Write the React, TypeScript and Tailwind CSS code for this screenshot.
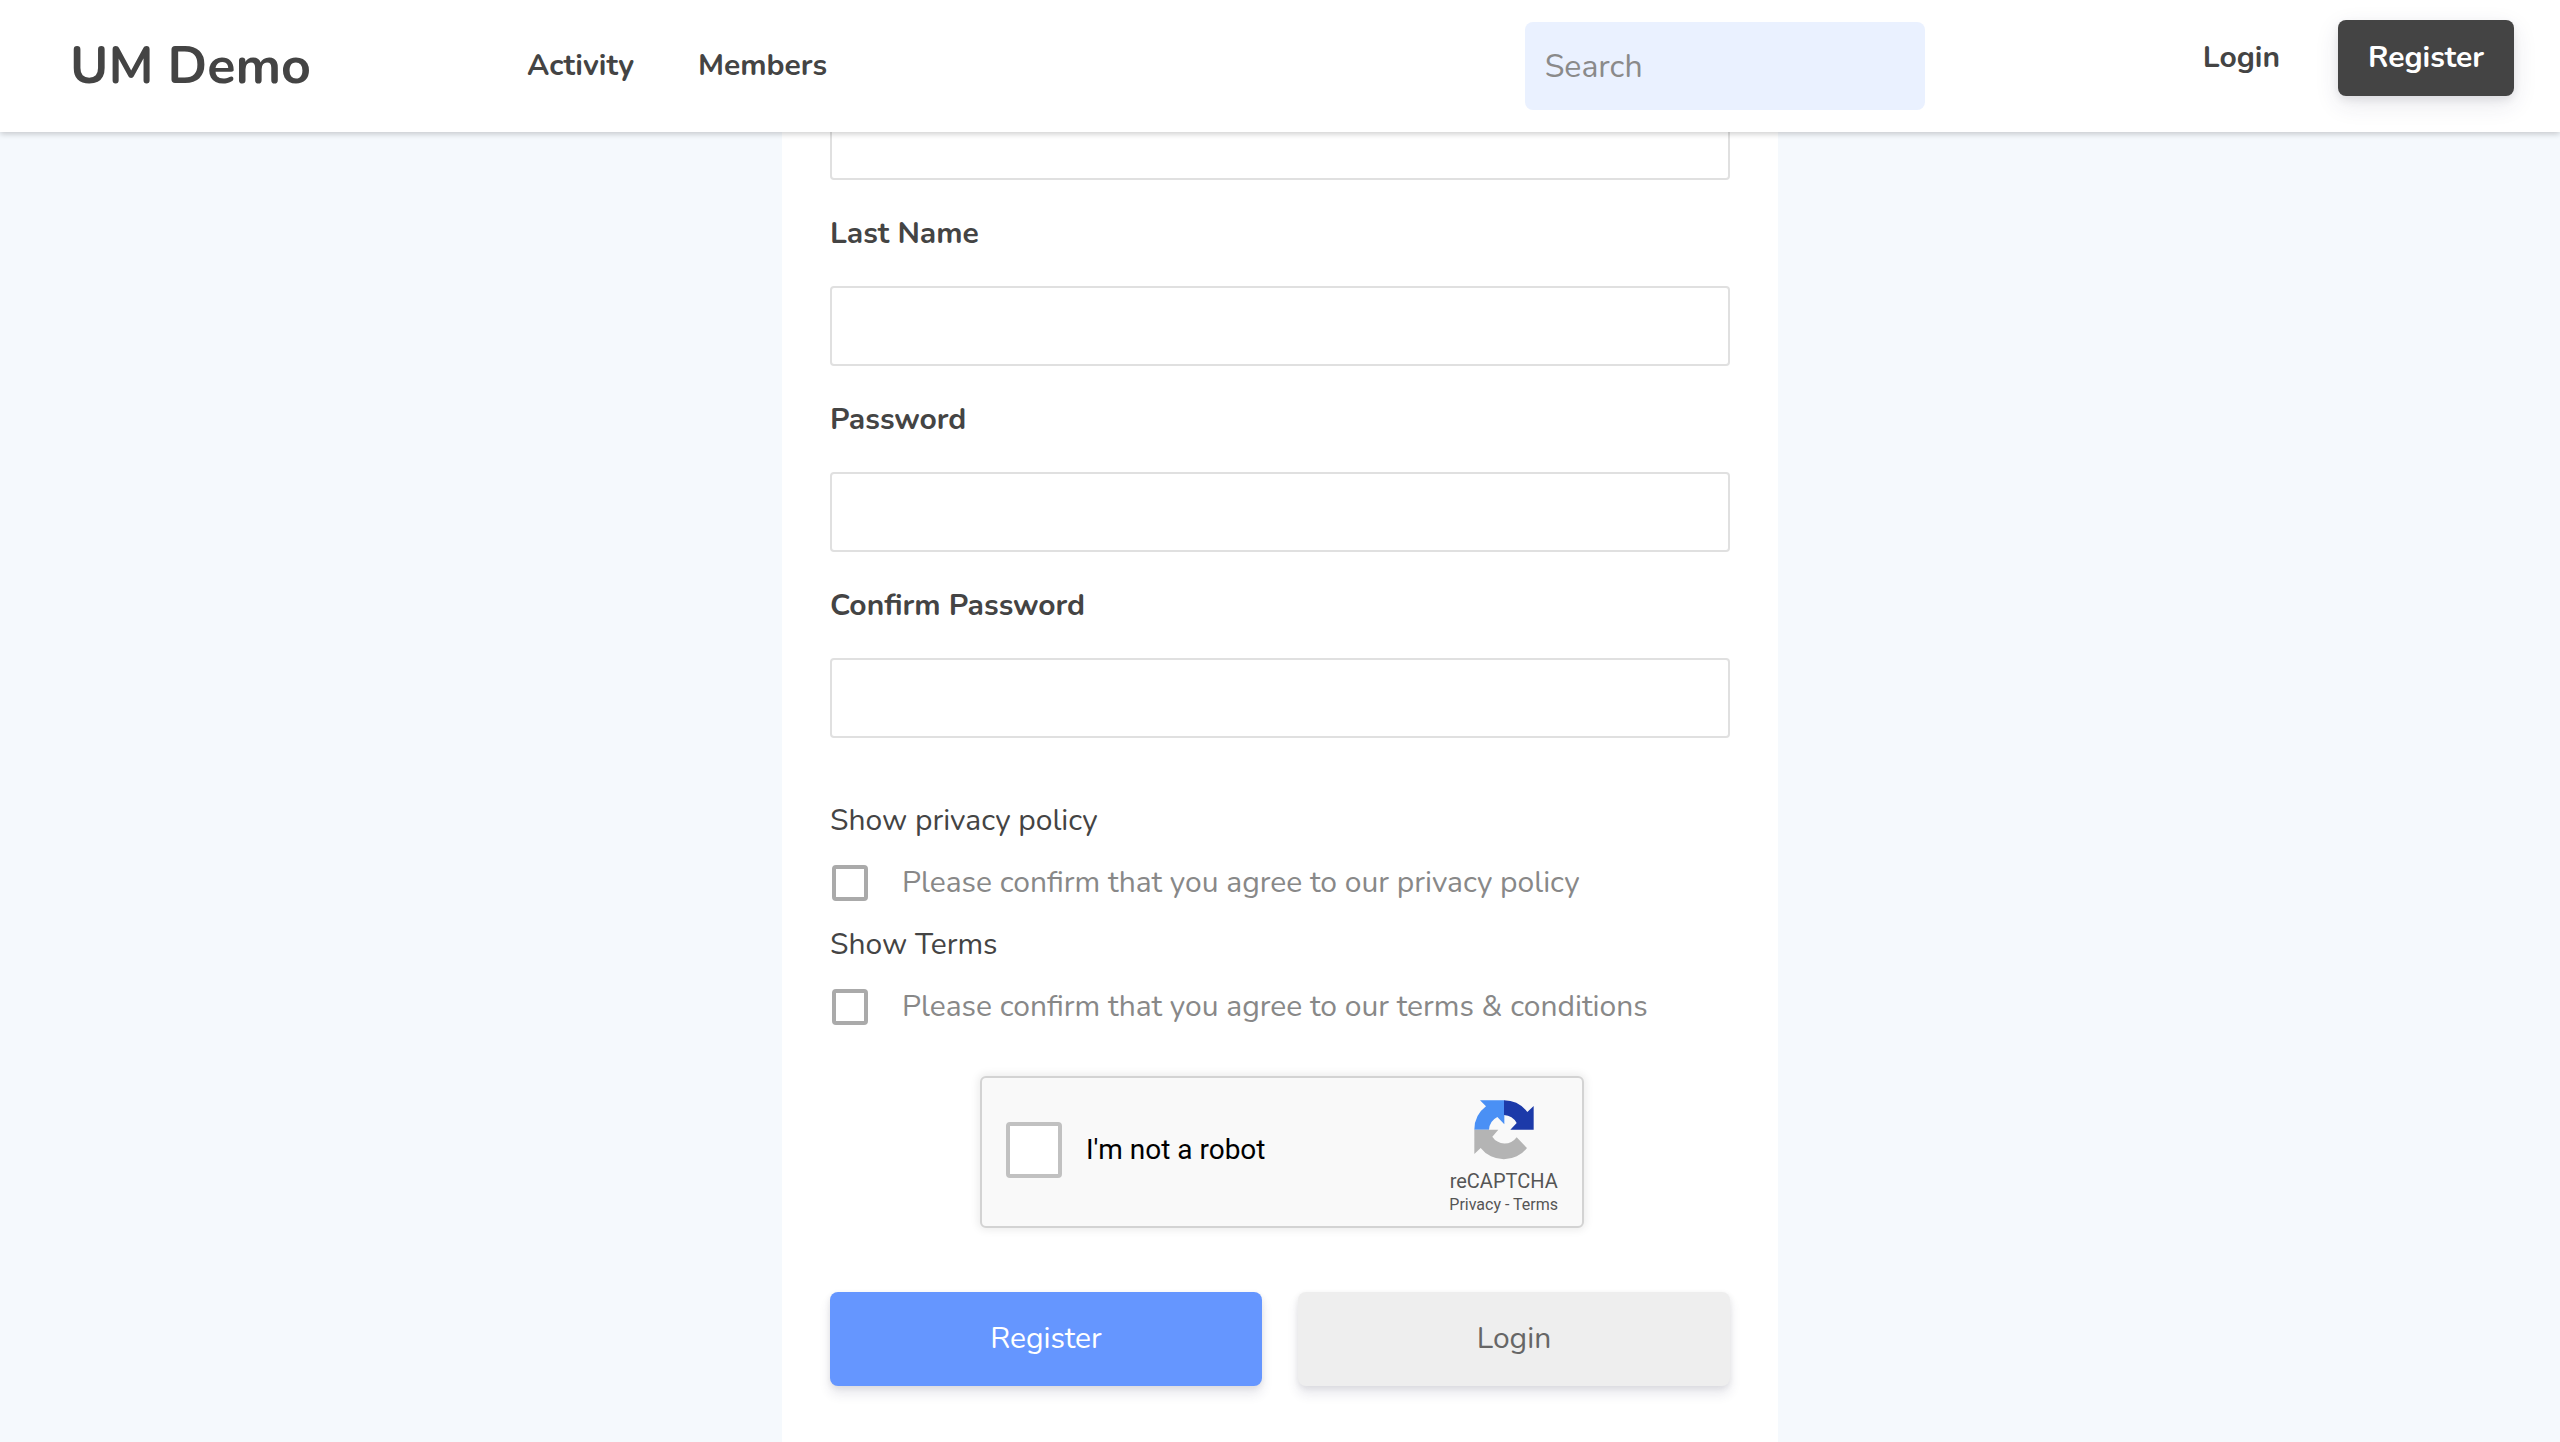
const SANS = "font-['Nunito','Lato',sans-serif]";

function RecaptchaLogo() {
  return (
    <svg viewBox="0 0 180 180" className="size-[60px]" aria-hidden="true">
      <path d="M1 89A89 88 0 0 1 36 19L18 1H91V73L70 51A46 46 0 0 0 45 89Z" fill="#4a90f5" />
      <path d="M90 1A89 88 0 0 1 160 36L179 18V89H109L128 69A46 46 0 0 0 90 45Z" fill="#1c3aa9" />
      <path d="M1 89H73L55 110A44 44 0 0 0 128 112L159 144A88 88 0 0 1 20 144L1 162Z" fill="#b4b4b4" />
    </svg>
  );
}

function Field({ id, label, type }: { id: string; label: string; type: string }) {
  return (
    <div>
      <label htmlFor={id} className="mb-8 block text-[30px] leading-10 font-bold text-[#444]">
        {label}
      </label>
      <input
        id={id}
        type={type}
        className="block h-20 w-full rounded-[4px] border-2 border-[#e0e0e0] bg-white px-6 text-[30px] outline-none"
      />
    </div>
  );
}

function Consent({ id, link, label }: { id: string; link: string; label: string }) {
  return (
    <div>
      <a href="#" className="block text-[30px] leading-10 text-[#444]">
        {link}
      </a>
      <div className="mt-[22px] flex h-10 items-center gap-[34px] pl-[2px]">
        <input
          id={id}
          type="checkbox"
          className="size-9 appearance-none rounded-[4px] border-4 border-[#aaa] bg-white checked:bg-[#6596ff]"
        />
        <label htmlFor={id} className="text-[30px] leading-10 text-[#888]">
          {label}
        </label>
      </div>
    </div>
  );
}

function Header() {
  return (
    <header className="relative z-10 flex h-[132px] items-center bg-white pr-[46px] pl-[70px] shadow-[0_2px_6px_rgba(0,0,0,0.2)]">
      <div className="w-[457px]">
        <a href="#" className="text-[52px] leading-[60px] font-bold text-[#444]">
          UM Demo
        </a>
      </div>
      <nav className="flex gap-16 text-[30px] leading-10 font-bold text-[#444]">
        <a href="#">Activity</a>
        <a href="#">Members</a>
      </nav>
      <form className="mr-[278px] ml-auto" role="search">
        <input
          type="search"
          placeholder="Search"
          aria-label="Search"
          className="block h-[88px] w-[400px] rounded-lg bg-[#eaf1ff] px-5 text-[32px] text-[#444] outline-none placeholder:text-[#8a8a8a]"
        />
      </form>
      <div className="mb-4 flex items-center gap-[58px] text-[30px] leading-10 font-bold">
        <a href="#" className="text-[#444]">
          Login
        </a>
        <a
          href="#"
          className="flex h-[76px] w-44 items-center justify-center rounded-lg bg-[#444] text-white shadow-[0_8px_24px_rgba(50,50,93,0.11),0_4px_8px_rgba(0,0,0,0.08)]"
        >
          Register
        </a>
      </div>
    </header>
  );
}

export default function App() {
  return (
    <div className={`flex min-h-screen flex-col bg-[#f5f9fd] ${SANS}`}>
      <Header />
      <main className="mx-auto -mt-8 w-full max-w-[996px] grow bg-white px-12">
        <form>
          <input
            type="text"
            aria-label="First Name"
            className="mb-[34px] block h-20 w-full rounded-[4px] border-2 border-[#e0e0e0] bg-white px-6 text-[30px] outline-none"
          />
          <div className="flex flex-col gap-[34px]">
            <Field id="last-name" label="Last Name" type="text" />
            <Field id="password" label="Password" type="password" />
            <Field id="confirm-password" label="Confirm Password" type="password" />
          </div>

          <div className="mt-[63px] flex flex-col gap-[22px]">
            <Consent
              id="privacy"
              link="Show privacy policy"
              label="Please confirm that you agree to our privacy policy"
            />
            <Consent
              id="terms"
              link="Show Terms"
              label="Please confirm that you agree to our terms & conditions"
            />
          </div>

          <div className="mt-[49px] ml-[150px] flex h-[152px] max-w-[604px] rounded-md border-2 border-[#d3d3d3] bg-[#f9f9f9] pr-6 pl-6 font-['Roboto',sans-serif] shadow-[0_0_8px_2px_rgba(0,0,0,0.08)]">
            <div className="flex h-[144px] items-center">
              <input
                id="robot"
                type="checkbox"
                className="size-14 appearance-none rounded-[4px] border-4 border-[#c1c1c1] bg-white"
              />
              <label htmlFor="robot" className="ml-6 text-[28px] leading-8 text-black">
                I'm not a robot
              </label>
            </div>
            <div className="ml-auto flex flex-col items-center pt-[22px] text-[#555]">
              <RecaptchaLogo />
              <p className="mt-[7px] text-[20px] leading-7">reCAPTCHA</p>
              <p className="text-[16px] leading-5">
                <a href="#">Privacy</a> - <a href="#">Terms</a>
              </p>
            </div>
          </div>

          <div className="mt-16 grid grid-cols-2 gap-9 text-[30px] leading-10">
            <button
              type="submit"
              className="h-[94px] rounded-lg bg-[#6596ff] text-white shadow-[0_8px_12px_rgba(50,50,93,0.11),0_2px_6px_rgba(0,0,0,0.08)]"
            >
              Register
            </button>
            <button
              type="button"
              className="h-[94px] rounded-lg bg-[#eee] text-[#666] shadow-[0_8px_12px_rgba(50,50,93,0.11),0_2px_6px_rgba(0,0,0,0.08)]"
            >
              Login
            </button>
          </div>
        </form>
      </main>
    </div>
  );
}
